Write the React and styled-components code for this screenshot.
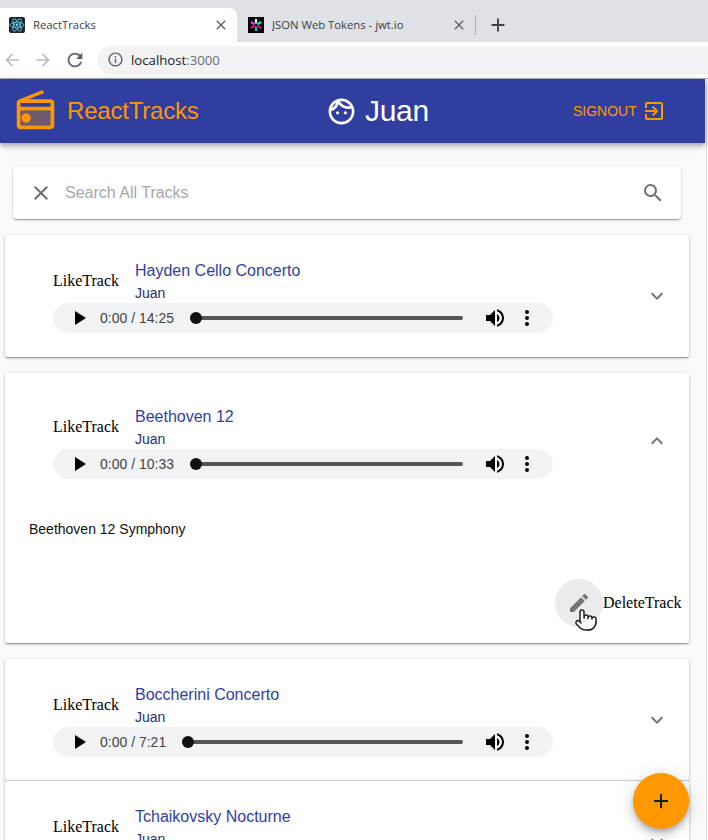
import styled, { createGlobalStyle } from "styled-components";
import {
  MdAdd,
  MdArrowBack,
  MdArrowForward,
  MdClose,
  MdEdit,
  MdExitToApp,
  MdExpandLess,
  MdExpandMore,
  MdInfoOutline,
  MdMoreVert,
  MdOutlineFace,
  MdPlayArrow,
  MdRefresh,
  MdSearch,
  MdVolumeUp,
} from "react-icons/md";
import { Pointer } from "lucide-react";

const GlobalStyle = createGlobalStyle`
  html, body {
    margin: 0;
    height: 840px;
    overflow: hidden;
    background: #fafafa;
    font-family: "Liberation Sans", Arial, sans-serif;
  }
`;

const Window = styled.div`
  width: 708px;
  height: 840px;
  overflow: hidden;
  display: flex;
  flex-direction: column;
  position: relative;
`;

const TabStrip = styled.div`
  height: 42px;
  flex: none;
  box-sizing: border-box;
  padding-top: 8px;
  background: #dee1e6;
  display: flex;
  align-items: stretch;
`;

const Tab = styled.div`
  width: ${(p) => (p.$active ? "237px" : "238px")};
  box-sizing: border-box;
  padding: 0 8px 0 ${(p) => (p.$active ? "9px" : "11px")};
  display: flex;
  align-items: center;
  gap: 8px;
  background: ${(p) => (p.$active ? "#fff" : "transparent")};
  border-radius: ${(p) => (p.$active ? "0 8px 0 0" : "0")};
  color: #3c4043;
  font-family: "Open Sans", sans-serif;
  font-size: 11.3px;
  line-height: 32px;
`;

const TabTitle = styled.span`
  flex: 1;
  white-space: nowrap;
  overflow: hidden;
`;

const TabClose = styled(MdClose)`
  font-size: 16px;
  color: #5f6368;
  flex: none;
`;

const TabDivider = styled.div`
  width: 1px;
  height: 20px;
  margin-top: 7px;
  background: #a9acb1;
`;

const NewTab = styled(MdAdd)`
  font-size: 22px;
  color: #3c4043;
  margin: 6px 0 0 11px;
`;

const Toolbar = styled.div`
  flex: none;
  box-sizing: border-box;
  background: #fff;
  border-bottom: 1px solid #b4b4b4;
  height: 37px;
  display: flex;
  align-items: center;
  padding-bottom: 1px;
`;

const NavIcons = styled.div`
  width: 97px;
  flex: none;
  display: flex;
  align-items: center;
  gap: 11px;
  padding-left: 2px;
  box-sizing: border-box;
`;

const Omnibox = styled.div`
  flex: 1;
  height: 28px;
  background: #f1f3f4;
  border-radius: 14px 0 0 14px;
  display: flex;
  align-items: center;
  gap: 7px;
  padding-left: 10px;
  font-family: "Open Sans", sans-serif;
  font-size: 13.2px;
  color: #202124;
`;

const Port = styled.span`
  color: #6b6f74;
`;

const Page = styled.div`
  flex: 1;
  width: 706px;
  border-right: 1px solid #dcdcdc;
  min-height: 0;
`;

const AppBar = styled.header`
  width: 705px;
  height: 64px;
  background: #303f9f;
  display: flex;
  align-items: center;
  padding-left: 16px;
  box-sizing: border-box;
  box-shadow: 0 2px 4px -1px rgba(0, 0, 0, 0.2), 0 4px 5px 0 rgba(0, 0, 0, 0.14),
    0 1px 10px 0 rgba(0, 0, 0, 0.12);
`;

const Brand = styled.div`
  width: 304px;
  flex: none;
  display: flex;
  align-items: center;
  gap: 14px;
  color: #ff9800;
  font-size: 24px;
  letter-spacing: -0.2px;
`;

const User = styled.div`
  width: 240px;
  flex: none;
  display: flex;
  align-items: center;
  gap: 8px;
  padding-left: 6px;
  box-sizing: border-box;
  color: #fff;
  font-size: 30px;
  letter-spacing: -0.3px;
`;

const FaceIcon = styled(MdOutlineFace)`
  font-size: 31px;
`;

const SignOut = styled.div`
  margin-left: 13px;
  display: flex;
  align-items: center;
  gap: 5px;
  color: #ff9800;
  font-size: 14px;
`;

const Content = styled.main`
  padding: 24px 17px 0 5px;
`;

const SearchPaper = styled.div`
  height: 52px;
  margin: 0 8px 16px;
  background: #fff;
  border-radius: 4px;
  display: flex;
  align-items: center;
  padding: 0 16px;
  gap: 12px;
  color: #6f6f6f;
  box-shadow: 0 1px 3px 0 rgba(0, 0, 0, 0.2), 0 1px 1px 0 rgba(0, 0, 0, 0.14),
    0 2px 1px -1px rgba(0, 0, 0, 0.12);
`;

const SearchText = styled.span`
  flex: 1;
  color: #a8a8a8;
  font-size: 16px;
`;

const Card = styled.section`
  background: #fff;
  box-shadow: 0 1px 3px 0 rgba(0, 0, 0, 0.3), 0 1px 1px 0 rgba(0, 0, 0, 0.14),
    0 2px 1px -1px rgba(0, 0, 0, 0.12);
  margin-bottom: ${(p) => (p.$flush ? "0" : "16px")};
  border-bottom: ${(p) => (p.$divider ? "1px solid #d6d6d6" : "none")};
  border-radius: 2px;
`;

const Summary = styled.div`
  height: ${(p) => (p.$open ? "130px" : p.$divider ? "121px" : "122px")};
  box-sizing: border-box;
  display: flex;
  align-items: flex-start;
  padding: ${(p) => (p.$open ? "32px" : "24px")} 20px 0 48px;
`;

const TrackInfo = styled.div`
  width: 500px;
  flex: none;
`;

const TitleRow = styled.div`
  display: flex;
  align-items: center;
  height: 44px;
`;

const LikeTrack = styled.span`
  width: 82px;
  flex: none;
  font-family: "Liberation Serif", "Times New Roman", serif;
  font-size: 16px;
  color: #000;
`;

const TrackName = styled.div`
  color: #303f9f;
  font-size: 16px;
  line-height: 24px;
`;

const Artist = styled.div`
  font-size: 14px;
  line-height: 21px;
  color: #26306f;
`;

const Player = styled.div`
  height: 30px;
  background: #f1f3f4;
  border-radius: 15px;
  display: flex;
  align-items: center;
  padding: 0 14px;
  color: #000;
`;

const PlayIcon = styled(MdPlayArrow)`
  font-size: 24px;
  flex: none;
  margin-right: 9px;
`;

const Time = styled.span`
  font-size: 14px;
  color: #444;
  white-space: nowrap;
`;

const Track = styled.div`
  flex: 1;
  height: 4px;
  margin: 0 20px 0 16px;
  background: #555;
  border-radius: 2px;
  position: relative;
`;

const Thumb = styled.span`
  position: absolute;
  left: 0;
  top: -4px;
  width: 12px;
  height: 12px;
  border-radius: 50%;
  background: #111;
`;

const Volume = styled(MdVolumeUp)`
  font-size: 24px;
  flex: none;
`;

const More = styled(MdMoreVert)`
  font-size: 24px;
  flex: none;
  margin-left: 8px;
`;

const Chevron = styled.div`
  margin: ${(p) => (p.$open ? "24px" : "25px")} 0 0 auto;
  font-size: 24px;
  line-height: 0;
  color: #757575;
`;

const Details = styled.div`
  padding: 16px 24px 0;
  font-size: 14px;
  line-height: 21px;
  color: #111;
`;

const Actions = styled.div`
  display: flex;
  justify-content: flex-end;
  align-items: center;
  padding: 39px 8px 16px 0;
`;

const EditButton = styled.div`
  width: 48px;
  height: 48px;
  border-radius: 50%;
  background: #ebebeb;
  color: #757575;
  display: flex;
  align-items: center;
  justify-content: center;
  position: relative;
`;

const HandCursor = styled(Pointer)`
  position: absolute;
  left: 19px;
  top: 29px;
  fill: #fff;
  color: #222;
`;

const DeleteTrack = styled.span`
  font-family: "Liberation Serif", "Times New Roman", serif;
  font-size: 16px;
  color: #000;
  width: 78px;
  white-space: nowrap;
`;

const Fab = styled.button`
  position: absolute;
  left: 633px;
  top: 773px;
  width: 56px;
  height: 56px;
  padding: 0;
  border: 0;
  border-radius: 50%;
  background: #ff9800;
  color: #1b1b1b;
  display: flex;
  align-items: center;
  justify-content: center;
  box-shadow: 0 3px 5px -1px rgba(0, 0, 0, 0.2), 0 6px 10px 0 rgba(0, 0, 0, 0.14),
    0 1px 18px 0 rgba(0, 0, 0, 0.12);
`;

const ReactFavicon = () => (
  <svg width="16" height="16" viewBox="0 0 16 16" style={{ flex: "none" }}>
    <rect width="16" height="16" rx="2" fill="#20232a" />
    <g fill="none" stroke="#61dafb" strokeWidth="0.8">
      <ellipse cx="8" cy="8" rx="7" ry="2.8" />
      <ellipse cx="8" cy="8" rx="7" ry="2.8" transform="rotate(60 8 8)" />
      <ellipse cx="8" cy="8" rx="7" ry="2.8" transform="rotate(120 8 8)" />
    </g>
    <circle cx="8" cy="8" r="1.4" fill="#61dafb" />
  </svg>
);

const JwtFavicon = () => (
  <svg width="16" height="16" viewBox="0 0 16 16" style={{ flex: "none" }}>
    <rect width="16" height="16" fill="#000" />
    <g strokeWidth="2.2">
      <path d="M8 2v4.5" stroke="#fff" />
      <path d="M8 9.5V14" stroke="#00b9f1" />
      <path d="M2.8 5l3.9 2.2" stroke="#d63aff" />
      <path d="M9.3 8.8l3.9 2.2" stroke="#fb015b" />
      <path d="M13.2 5L9.3 7.2" stroke="#00f2e6" />
      <path d="M6.7 8.8L2.8 11" stroke="#fb015b" />
    </g>
  </svg>
);

const RadioIcon = () => (
  <svg width="45" height="45" viewBox="0 0 24 24" style={{ flex: "none", margin: "-2px -5px 0 -3px" }}>
    <path d="M4 12h16v8H4z" fill="#ff9800" opacity="0.3" />
    <path
      fill="#ff9800"
      d="M3.24 6.15C2.51 6.43 2 7.17 2 8v12c0 1.1.89 2 2 2h16c1.11 0 2-.9 2-2V8c0-1.1-.9-2-2-2H8.3l8.26-3.34L15.88 1 3.24 6.15zM20 20H4v-8h16v8zm0-10H4V8h16v2z"
    />
    <circle cx="7" cy="16" r="2.5" fill="#ff9800" />
  </svg>
);

function AudioPlayer({ duration }) {
  return (
    <Player>
      <PlayIcon />
      <Time>0:00 / {duration}</Time>
      <Track>
        <Thumb />
      </Track>
      <Volume />
      <More />
    </Player>
  );
}

function TrackCard({ name, duration, open, description, flush, divider }) {
  return (
    <Card $flush={flush} $divider={divider}>
      <Summary $open={open} $divider={divider}>
        <TrackInfo>
          <TitleRow>
            <LikeTrack>LikeTrack</LikeTrack>
            <div>
              <TrackName>{name}</TrackName>
              <Artist>Juan</Artist>
            </div>
          </TitleRow>
          <AudioPlayer duration={duration} />
        </TrackInfo>
        <Chevron $open={open}>{open ? <MdExpandLess /> : <MdExpandMore />}</Chevron>
      </Summary>
      {open && (
        <>
          <Details>{description}</Details>
          <Actions>
            <EditButton>
              <MdEdit size={24} />
              <HandCursor size={24} strokeWidth={1.5} />
            </EditButton>
            <DeleteTrack>DeleteTrack</DeleteTrack>
          </Actions>
        </>
      )}
    </Card>
  );
}

const tracks = [
  { name: "Hayden Cello Concerto", duration: "14:25" },
  { name: "Beethoven 12", duration: "10:33", open: true, description: "Beethoven 12 Symphony" },
  { name: "Boccherini Concerto", duration: "7:21", flush: true, divider: true },
  { name: "Tchaikovsky Nocturne", duration: "6:02", flush: true },
];

export default function App() {
  return (
    <Window>
      <GlobalStyle />
      <TabStrip>
        <Tab $active>
          <ReactFavicon />
          <TabTitle>ReactTracks</TabTitle>
          <TabClose />
        </Tab>
        <Tab>
          <JwtFavicon />
          <TabTitle>JSON Web Tokens - jwt.io</TabTitle>
          <TabClose />
        </Tab>
        <TabDivider />
        <NewTab />
      </TabStrip>
      <Toolbar>
        <NavIcons>
          <MdArrowBack size={20} color="#bdbdbd" />
          <MdArrowForward size={20} color="#bdbdbd" />
          <MdRefresh size={22} color="#5f6368" />
        </NavIcons>
        <Omnibox>
          <MdInfoOutline size={17} color="#5f6368" />
          <span>
            localhost<Port>:3000</Port>
          </span>
        </Omnibox>
      </Toolbar>
      <Page>
        <AppBar>
          <Brand>
            <RadioIcon />
            <span>ReactTracks</span>
          </Brand>
          <User>
            <FaceIcon />
            <span>Juan</span>
          </User>
          <SignOut>
            SIGNOUT
            <MdExitToApp size={24} />
          </SignOut>
        </AppBar>
        <Content>
          <SearchPaper>
            <MdClose size={24} />
            <SearchText>Search All Tracks</SearchText>
            <MdSearch size={24} />
          </SearchPaper>
          {tracks.map((track) => (
            <TrackCard key={track.name} {...track} />
          ))}
        </Content>
      </Page>
      <Fab>
        <MdAdd size={24} />
      </Fab>
    </Window>
  );
}
